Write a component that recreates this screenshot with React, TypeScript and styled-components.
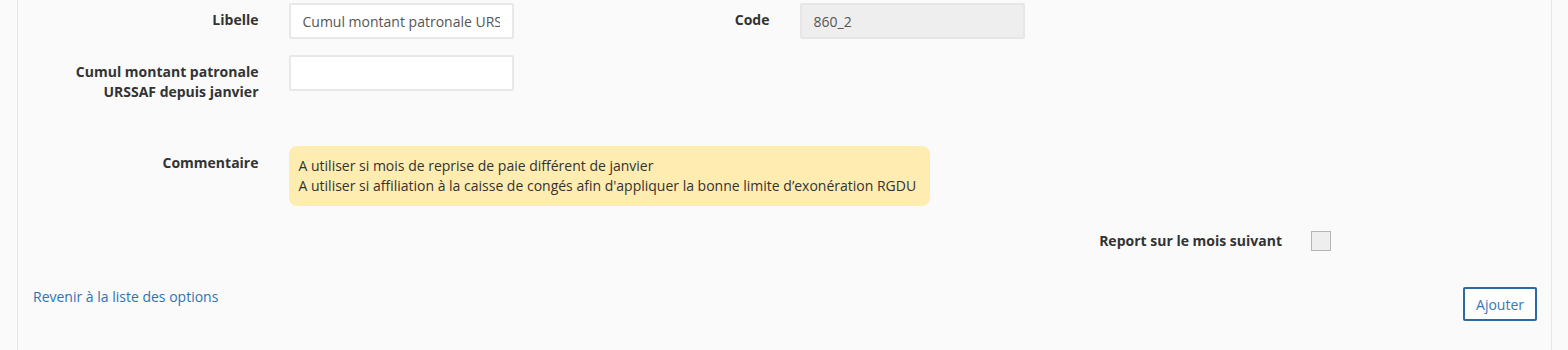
import React from "react";
import styled, { createGlobalStyle } from "styled-components";

const GlobalStyle = createGlobalStyle`
  html, body {
    margin: 0;
    padding: 0;
    background: #fafafa;
    font-family: "Open Sans", "Liberation Sans", sans-serif;
    font-size: 14px;
    line-height: 20px;
    color: #333;
  }
`;

const Page = styled.div`
  padding: 0 16px 0 17px;
  height: 350px;
  overflow: hidden;
`;

const Panel = styled.div`
  border-left: 1px solid #e6e6e6;
  border-right: 1px solid #e6e6e6;
  height: 350px;
  padding-top: 3px;
  box-sizing: border-box;
`;

const Row = styled.div<{ $mb?: number }>`
  display: grid;
  grid-template-columns: repeat(6, 1fr);
  margin-bottom: ${(p) => p.$mb ?? 16}px;
`;

const Label = styled.label<{ $span?: number }>`
  grid-column: span ${(p) => p.$span ?? 1};
  padding: 7px 15px 0;
  text-align: right;
  font-weight: 700;
  color: #333;
`;

const Field = styled.div<{ $span?: number }>`
  grid-column: span ${(p) => p.$span ?? 1};
  padding: 0 15px;
`;

const Input = styled.input<{ $readOnly?: boolean }>`
  width: 100%;
  box-sizing: border-box;
  height: 36px;
  padding: 0 12px;
  border: 2px solid ${(p) => (p.$readOnly ? "#e6e6e6" : "#e8e8e8")};
  border-radius: 2px;
  background: ${(p) => (p.$readOnly ? "#eeeeee" : "#ffffff")};
  font-family: inherit;
  font-size: 14px;
  color: #555;
  outline: none;
`;

const Note = styled.div`
  display: inline-block;
  background: #ffecb0;
  border-radius: 8px;
  padding: 10px 14px 10px 10px;
  color: #333;
  white-space: nowrap;
`;

const CheckRow = styled.div`
  display: flex;
  align-items: center;
  justify-content: flex-end;
  margin-bottom: 36px;
`;

const CheckLabel = styled.label`
  font-weight: 700;
  padding-right: 29px;
`;

const CheckBox = styled.span`
  display: inline-block;
  width: 18px;
  height: 18px;
  background: #eeeeee;
  border: 1px solid #b4b4b4;
  margin-right: 220px;
`;

const Footer = styled.div`
  display: flex;
  justify-content: space-between;
  align-items: flex-start;
  padding: 0 14px 0 15px;
`;

const BackLink = styled.a`
  color: #2f73b4;
  text-decoration: none;
  line-height: 20px;
`;

const Button = styled.button`
  height: 34px;
  padding: 0 11px;
  border: 2px solid #2c6aa4;
  border-radius: 2px;
  background: #ffffff;
  color: #3577ba;
  font-family: inherit;
  font-size: 14px;
`;

export default function App() {
  return (
    <>
      <GlobalStyle />
      <Page>
        <Panel>
          <Row>
            <Label>Libelle</Label>
            <Field>
              <Input defaultValue="Cumul montant patronale URSSAF depuis janvier" />
            </Field>
            <Label>Code</Label>
            <Field>
              <Input $readOnly readOnly defaultValue="860_2" />
            </Field>
          </Row>
          <Row $mb={44}>
            <Label>
              Cumul montant patronale
              <br />
              URSSAF depuis janvier
            </Label>
            <Field>
              <Input />
            </Field>
          </Row>
          <Row $mb={25}>
            <Label>Commentaire</Label>
            <Field $span={4}>
              <Note>
                A utiliser si mois de reprise de paie différent de janvier
                <br />
                A utiliser si affiliation à la caisse de congés afin d'appliquer la bonne limite d’exonération RGDU
              </Note>
            </Field>
          </Row>
          <CheckRow>
            <CheckLabel>Report sur le mois suivant</CheckLabel>
            <CheckBox />
          </CheckRow>
          <Footer>
            <BackLink href="#">Revenir à la liste des options</BackLink>
            <Button>Ajouter</Button>
          </Footer>
        </Panel>
      </Page>
    </>
  );
}
